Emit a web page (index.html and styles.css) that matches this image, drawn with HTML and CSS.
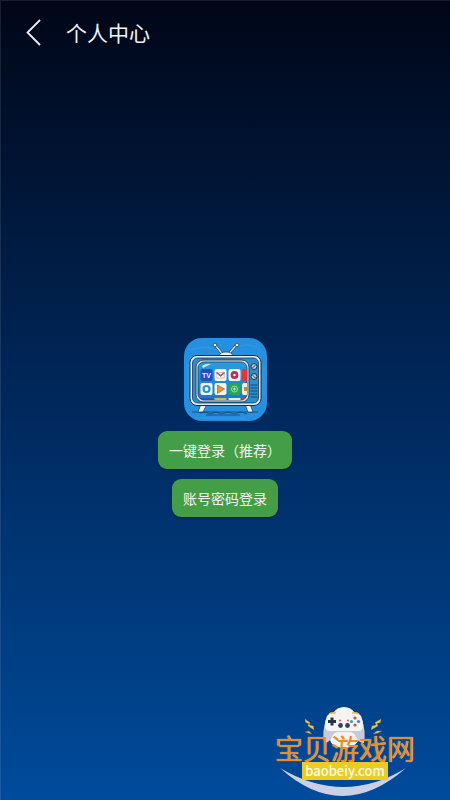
FILE: index.html
```
<!DOCTYPE html>
<html lang="zh-CN">
<head>
<meta charset="utf-8">
<meta name="viewport" content="width=device-width, initial-scale=1">
<title>个人中心</title>
<link rel="stylesheet" href="styles.css">
</head>
<body>
<header class="topbar">
  <button class="back" type="button" aria-label="返回">
    <svg width="18" height="28" viewBox="0 0 18 28" fill="none" stroke="#eef0f5" stroke-width="1.8"><path d="M16 2 3.500 14.500 16 27"/></svg>
  </button>
  <h1 class="title">个人中心</h1>
</header>

<main class="login">
  <svg class="app-icon" viewBox="0 0 83 83" aria-hidden="true">
    <defs>
      <clipPath id="screen"><rect x="14" y="24" width="49" height="38" rx="6"/></clipPath>
      <linearGradient id="glass" x1="0" y1="0" x2="0" y2="1"><stop offset="0" stop-color="#2b9be2"/><stop offset="1" stop-color="#167bc8"/></linearGradient>
    </defs>
    <rect width="83" height="83" rx="18" fill="#2590df"/>
    <g fill="none" stroke="#55aeec" stroke-width=".6" opacity=".6"><path d="M5 12q15-5 28 0M55 8q13-4 22 5M4 26v35M80 28v30M12 80h50"/></g>
    <g fill="none" stroke="#173b60" stroke-width=".7"><path d="M8 74h66M16 75l5-1 5 2 6-2 5 2 7-2 6 2 7-2 6 2M22 77h34"/></g>
    <g stroke-linecap="round"><path d="M38 15.500 31.500 7.500M45 15.500 52 7.500" stroke="#132b47" stroke-width="2.600"/><path d="M38 15.500 31.500 7.500M45 15.500 52 7.500" stroke="#dce8ef" stroke-width="1.500"/></g>
    <g fill="#e9f1f4" stroke="#173552" stroke-width=".7"><circle cx="31" cy="7" r="1.800"/><circle cx="53" cy="7" r="1.800"/><path d="M35 18q1-4 7-4t7 4z"/><path d="m17 66-3 8h5l4-8zM61 66l3 8h5l-3-8z"/></g>
    <rect x="6" y="17.500" width="71" height="50" rx="7" fill="#e6eef2" stroke="#142d48"/>
    <rect x="8.500" y="20" width="66" height="45" rx="5" fill="#2a8dd2" stroke="#173654" stroke-width=".8"/>
    <rect x="12" y="22" width="53" height="42" rx="7" fill="#d8e5ec" stroke="#183755" stroke-width=".9"/>
    <rect x="14" y="24" width="49" height="38" rx="6" fill="url(#glass)" stroke="#183755" stroke-width=".8"/>
    <g clip-path="url(#screen)">
      <path d="M18 28q4-3 9-2l-8 4z" fill="#c4e9fa"/>
      <rect x="16.500" y="31" width="12" height="12" rx="2" fill="#214fc0"/>
      <g fill="#f7f4ec"><rect x="30.500" y="31" width="12" height="12" rx="2"/><rect x="44.500" y="31" width="12" height="12" rx="2"/><rect x="16.500" y="45" width="12" height="12" rx="2"/><rect x="30.500" y="45" width="12" height="12" rx="2"/></g>
      <rect x="58" y="31" width="10" height="12" rx="2" fill="#dc3547"/>
      <rect x="44.500" y="45" width="12" height="12" rx="2" fill="#26a657"/>
      <rect x="58" y="45" width="10" height="12" rx="2" fill="#f5eee0"/>
      <text class="tile-label" x="22.500" y="39.500" text-anchor="middle">TV</text>
      <path d="M32.800 34.500h7.500v5.500h-7.500z" fill="#fff" stroke="#9ca9bd" stroke-width=".6"/><path d="m32.500 34.500 4 3.300 4-3.300" fill="none" stroke="#d43c3e" stroke-width="1.500"/>
      <circle cx="50.500" cy="37" r="2.600" fill="#fff" stroke="#bd2e50" stroke-width="2.600"/>
      <circle cx="22.500" cy="51" r="3" fill="#fff" stroke="#2497d7" stroke-width="2.200"/>
      <path d="m33.500 47 7 4-7 4.500z" fill="#e99531" stroke="#8f5430" stroke-width=".6"/>
      <circle cx="50.500" cy="51" r="3" fill="none" stroke="#9cdbac"/><path d="M49 51h3M50.500 49.500v3" stroke="#d8f5dd" stroke-width=".8"/>
      <path d="M60 51h5" stroke="#c28c2f" stroke-width="4"/>
      <path d="M16 60h12v3H16z" fill="#2754b8"/><path d="M30.500 60h12v3h-12z" fill="#e0b447"/><path d="M44.500 60h12v3h-12z" fill="#e9e8df"/><path d="M58 60h5v3h-5z" fill="#cf444c"/>
    </g>
    <g fill="#b9c6cc" stroke="#193650"><circle cx="70" cy="28.500" r="3"/><circle cx="70" cy="38.500" r="3"/></g>
    <path d="m68.500 30 3-3M68.500 37l3 3" stroke="#31506a"/>
    <path d="M66.500 47h7M66.500 50h7M66.500 53h7M66.500 56h7M66.500 59h7" stroke="#193f65" stroke-width=".9"/>
  </svg>
  <button class="action" type="button">一键登录（推荐）</button>
  <button class="action" type="button">账号密码登录</button>
</main>

<aside class="brand">
  <svg class="brand-art" viewBox="0 0 140 82" aria-hidden="true">
    <path d="M5 62Q67 118 131 62Q69 100 5 62" fill="#ccd0e5"/>
    <ellipse cx="69" cy="33" rx="14" ry="9" fill="#f4f3f1"/>
    <path d="M51 14Q47 24 49 37q5 0 8-6 2-5 6-5h12q4 0 6 5 3 6 8 6 2-13-2-23z" fill="#c9cad8"/>
    <path d="M50 20q0-6 2-10 2-3 6-3 4-6 11-6t11 6q4 0 6 3 2 4 2 10 0 5-5 5H55q-5 0-5-5" fill="#f5f4f4"/>
    <path d="M54 8q3-2 7-1M77 7q4-1 7 1" fill="none" stroke="#e8b556" stroke-width="1.500"/>
    <path d="M57 11.500v8M53 15.500h8" stroke="#24324b" stroke-width="3"/>
    <circle cx="65.500" cy="19.500" r="2.400" fill="#364158"/><circle cx="72.500" cy="19.500" r="2.400" fill="#364158"/>
    <circle cx="65" cy="14.500" r="1" fill="#d94b61"/><circle cx="73" cy="14.500" r="1" fill="#d94b61"/>
    <circle cx="80" cy="12" r="1.600" fill="#db4650"/><circle cx="83.500" cy="15.500" r="1.600" fill="#4084bf"/><circle cx="76.500" cy="15.500" r="1.600" fill="#27a4a4"/><circle cx="80" cy="19" r="1.600" fill="#db4650"/>
    <g fill="#efc648" stroke="#8d7535" stroke-width=".3"><path d="m30 13 5 3.500-.5 2.500 4 1 .5 4-6-4 .5-2.500-3-1zM106 13l-6 3.500 1 2.500-4 1-1 4 7-4-1-2.500 3.500-1zM30 26l4-1 3 3-4-1zM107 25h-5l-4 3 5-1z"/></g>
  </svg>
  <p class="brand-name">宝贝游戏网</p>
  <p class="brand-url">baobeiy.com</p>
</aside>
</body>
</html>
```

FILE: styles.css
```
* {
  box-sizing: border-box;
}

body {
  margin: 0;
  min-height: 100vh;
  display: flex;
  flex-direction: column;
  position: relative;
  color: #f2f4f7;
  font-family: "Noto Sans CJK SC", "Noto Sans", sans-serif;
  background: linear-gradient(#000617, #00285c 50%, #004b9b);
  box-shadow: inset 1px 1px #ffffff18;
}

button {
  border: 0;
  font: inherit;
  color: inherit;
  cursor: pointer;
}

.topbar {
  display: flex;
  align-items: center;
  gap: 24px;
  height: 64px;
  padding: 0 24px;
}

.back {
  display: flex;
  padding: 0;
  background: none;
}

.title {
  margin: 0;
  font-size: 21px;
  font-weight: 400;
  line-height: 32px;
}

.login {
  flex: 1;
  display: flex;
  flex-direction: column;
  align-items: center;
  justify-content: center;
  gap: 10px;
  padding-bottom: 10px;
}

.app-icon {
  width: 83px;
  height: 83px;
}

.tile-label {
  fill: #eef3fb;
  font: 700 7px "Liberation Sans", sans-serif;
}

.action {
  height: 38px;
  padding: 0 11px;
  border-radius: 9px;
  background: #449e48;
  font-size: 14px;
  line-height: 20px;
  box-shadow: 0 1px 2px #001d4a;
}

.brand {
  position: absolute;
  right: 35px;
  bottom: 12px;
  width: 140px;
  height: 82px;
  display: flex;
  flex-direction: column;
  align-items: center;
}

.brand-art {
  position: absolute;
  inset: 0;
  overflow: visible;
}

.brand-name {
  position: relative;
  margin: 28px 0 0;
  font-size: 28px;
  line-height: 28px;
  white-space: nowrap;
  color: #e98d20;
  text-shadow: 0 0 1px #e8d5bd;
}

.brand-url {
  position: relative;
  margin: 0;
  padding: 0 3px;
  background: #edcb27;
  color: #fffbe8;
  font-size: 13px;
  font-weight: 500;
  line-height: 18px;
}
```
